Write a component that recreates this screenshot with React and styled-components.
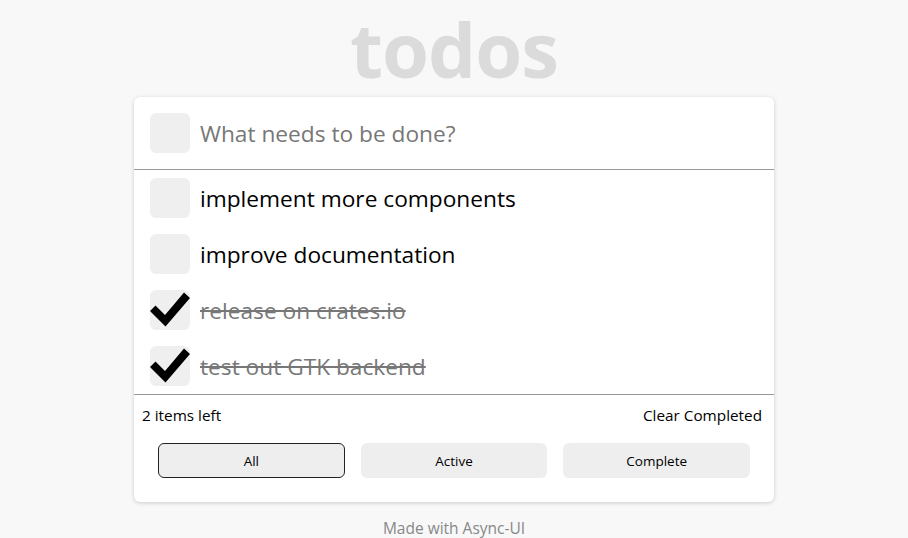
import React, { useState } from "react";
import styled, { createGlobalStyle } from "styled-components";

const Global = createGlobalStyle`
  html, body {
    margin: 0;
    padding: 0;
    background: #f8f8f8;
    font-family: "Open Sans", "Noto Sans", sans-serif;
  }
`;

const Page = styled.div`
  display: flex;
  flex-direction: column;
  align-items: center;
  width: 908px;
  height: 538px;
  overflow: hidden;
`;

const Title = styled.h1`
  margin: 0;
  line-height: 97px;
  font-size: 76px;
  font-weight: 700;
  color: #dbdbdb;
  letter-spacing: -1px;
`;

const Card = styled.div`
  width: 640px;
  background: #fff;
  border-radius: 6px;
  box-shadow: 0 1px 4px rgba(0, 0, 0, 0.18);
`;

const InputRow = styled.div`
  display: flex;
  align-items: center;
  gap: 10px;
  padding: 16px;
  border-bottom: 1px solid #999;
`;

const Box = styled.div`
  position: relative;
  flex: none;
  width: 40px;
  height: 40px;
  border-radius: 6px;
  background: #efefef;
`;

const Check = styled.svg`
  position: absolute;
  left: 0;
  top: 0;
`;

const Input = styled.input`
  flex: 1;
  border: none;
  outline: none;
  padding: 0;
  font-family: inherit;
  font-size: 22.7px;
  color: #000;
  background: transparent;
  &::placeholder {
    color: #777;
  }
`;

const List = styled.div`
  border-bottom: 1px solid #999;
`;

const Item = styled.div`
  display: flex;
  align-items: center;
  gap: 10px;
  padding: 8px 16px;
`;

const Label = styled.span`
  font-size: 22.7px;
  color: ${(p) => (p.done ? "#777" : "#000")};
  text-decoration: ${(p) => (p.done ? "line-through" : "none")};
`;

const Footer = styled.div`
  display: flex;
  justify-content: space-between;
  align-items: center;
  padding: 10px 12px 0 8px;
  font-size: 15.3px;
  color: #000;
`;

const Filters = styled.div`
  display: grid;
  grid-template-columns: repeat(3, 1fr);
  gap: 16px;
  padding: 18px 24px 24px;
`;

const FilterButton = styled.button`
  height: 35px;
  border-radius: 6px;
  border: 1px solid ${(p) => (p.active ? "#222" : "transparent")};
  background: #eeeeee;
  font-family: inherit;
  font-size: 13.5px;
  color: #000;
`;

const Credit = styled.div`
  margin-top: 16px;
  line-height: 20px;
  font-size: 15.5px;
  color: #888;
`;

function CheckBox({ checked }) {
  return (
    <Box>
      {checked && (
        <Check width="40" height="40" viewBox="0 0 40 40">
          <path d="M0 21 L5.5 15.5 L15 25 L34 2.5 L40 8 L15.5 36.5 Z" fill="#000" />
        </Check>
      )}
    </Box>
  );
}

const initial = [
  { text: "implement more components", done: false },
  { text: "improve documentation", done: false },
  { text: "release on crates.io", done: true },
  { text: "test out GTK backend", done: true },
];

export default function App() {
  const [todos] = useState(initial);
  const [filter, setFilter] = useState("All");
  const left = todos.filter((t) => !t.done).length;

  return (
    <Page>
      <Global />
      <Title>todos</Title>
      <Card>
        <InputRow>
          <CheckBox checked={false} />
          <Input placeholder="What needs to be done?" />
        </InputRow>
        <List>
          {todos.map((t) => (
            <Item key={t.text}>
              <CheckBox checked={t.done} />
              <Label done={t.done}>{t.text}</Label>
            </Item>
          ))}
        </List>
        <Footer>
          <span>{left} items left</span>
          <span>Clear Completed</span>
        </Footer>
        <Filters>
          {["All", "Active", "Complete"].map((f) => (
            <FilterButton key={f} active={filter === f} onClick={() => setFilter(f)}>
              {f}
            </FilterButton>
          ))}
        </Filters>
      </Card>
      <Credit>Made with Async-UI</Credit>
    </Page>
  );
}
